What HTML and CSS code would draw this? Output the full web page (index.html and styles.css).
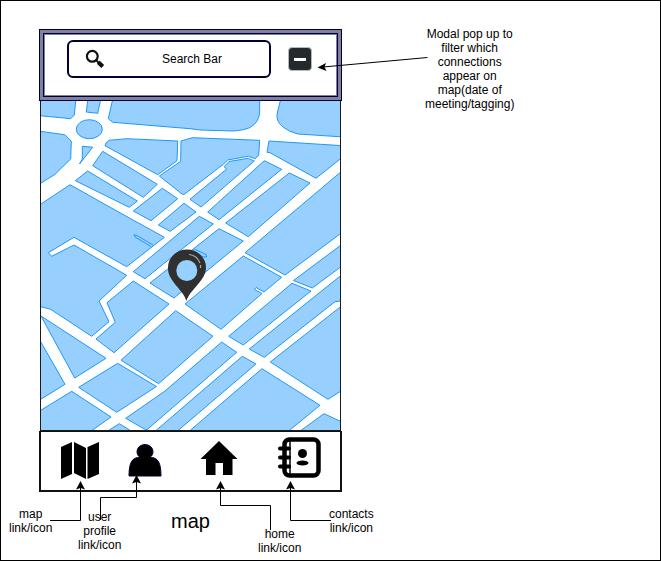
FILE: index.html
```html
<!DOCTYPE html>
<html lang="en">
<head>
<meta charset="utf-8">
<title>Map wireframe</title>
<link rel="stylesheet" href="styles.css">
</head>
<body>
<main class="canvas">
  <section class="phone">
    <header class="toolbar">
      <label class="search">
        <svg class="search-icon" viewBox="0 0 20 20" aria-hidden="true"><circle cx="7.3" cy="7.3" r="5.4" fill="none" stroke="#111" stroke-width="2.2"/><path d="M11.5 11.5l6 6" stroke="#111" stroke-width="2"/><path d="M13.3 13.3l4.4 4.2" stroke="#111" stroke-width="4.2"/></svg>
        <input class="search-input" type="text" placeholder="Search Bar" aria-label="Search Bar">
      </label>
      <button class="filter" type="button" aria-label="Filter connections"><span class="minus"></span></button>
    </header>
    <div class="map">
      <svg class="map-art" viewBox="41 101 299 329" preserveAspectRatio="xMidYMid slice" role="img" aria-label="Street map">
        <g class="blocks">
          <path d="M38 98H76L74.300 115 70.700 118.700 38 115.500Z"/>
          <path d="M88 98L86.300 112 97.700 113.300 101 98Z"/>
          <path d="M113 98L108.300 118.700 112.700 122.300 190 128.700 200 130 233 131Q245 130 250 127.500 260 122 259.700 110V98Z"/>
          <path d="M281 98L277.500 112Q275 121 283 127 289 132 298 134L344 137V98Z"/>
          <ellipse cx="89.300" cy="129.200" rx="13" ry="9.500"/>
          <path d="M38 131L64.700 134.700 71.300 141 70.700 159 55 174.300 38 185Z"/>
          <path d="M82.300 146.300L92.700 147.200 79.500 164 82.300 159Z"/>
          <path d="M109.300 140.300L126.700 138.700 177.700 141 177 160.700 157.700 174.700 105 145.700 106 143Z"/>
          <path d="M181 141L192.300 137.700 259.700 140.300 258.700 155 255.300 158.700 248.300 156.300 227.700 160 223.300 164.300 184 194.500 182 194 159.300 176 180.700 161.300Z"/>
          <path d="M224 166.700L229 161.500 248.300 158.300 254.300 161 201 207 190 199.300 226.700 169Z"/>
          <path d="M269 141L344 145.800V156L316 178.300 270 152.700 267 152.300Z"/>
          <path d="M264.300 160.700L281.700 169.300 219 219.700 207.700 212Z"/>
          <path d="M289.300 173L310 183 248.300 236.700 225.700 223Z"/>
          <path d="M344 169.300L245 252.700 285 275 344 231Z"/>
          <path d="M243.300 256L281.700 277.300 264 292 256 287.500 254.500 289.500 262 293.500 221 329.300 185 304Z"/>
          <path d="M344 242.800L293.500 280.500 312.300 288 344 264.500Z"/>
          <path d="M292 283.300L311 291 243.300 345 228.700 336.300Z"/>
          <path d="M344 273L249.300 349 264.300 357.300 335 301.700 344 300.500Z"/>
          <path d="M344 304L270.300 362 328 399.300 344 389Z"/>
          <path d="M324 413.700L344 423V434H296Z"/>
          <path d="M262 368.700L320 405.300 285 434H186Z"/>
          <path d="M242.300 356.300L256 364 174 434H152Z"/>
          <path d="M221.700 342L236.700 352.300 142 434 147 430.500 125.700 418.300 165 391Z"/>
          <path d="M119.300 423.700L136 434H103Z"/>
          <path d="M117.700 363.300L156.500 386.500 116.700 412.300 78.700 387.300Z"/>
          <path d="M175.700 310.700L213 336.300 158.500 383.700 121 360.200Z"/>
          <path d="M71.700 391.300L111 417 87 434H38V412Z"/>
          <path d="M38 337L65 384.300 38 401Z"/>
          <path d="M41 316L106 358.300 74.700 378Z"/>
          <path d="M38 306L50.700 309.300 91.700 336.300 109 321.700 99 301 126.700 275.300 74 245 51.700 256.300 48.300 252.700 74 237.300 126.700 266.700 164.300 237.300 106 205 70 184.700 38 206Z"/>
          <path d="M133.300 281L169 304 114 352.700 96 339 115.300 322.300 107 302.700Z"/>
          <path d="M87.700 171L137.300 201 129.300 207.300 75.300 180.700Z"/>
          <path d="M102.700 151.300L157.300 184.300 143.300 197.300 92.700 165.700Z"/>
          <path d="M162.300 188.300L177.700 198.700 151 220.700 133.300 211Z"/>
          <path d="M184 203.300L196 212 170.300 231.300 158.300 225Z"/>
          <path d="M199.300 216.300L213.300 224 145 278.700 133.300 271.700Z"/>
          <path d="M219 228.700L243.300 241 174 298 150 283Z"/>
          <path d="M151 246.500L135 237 134 234.800 137 235.500 153 245M194 249L206 254.500 206.500 257 203 257 193 251"/>
        </g>
        <path d="M186.500 301C183 289 167.500 281 168 267.500A19 18 0 0 1 206 267.500C206 281 190 289 186.500 301ZM186.800 260A10.500 10.500 0 1 0 186.800 281 10.500 10.500 0 0 0 186.800 260Z" fill="#303030" fill-rule="evenodd"/>
        <path d="M189 254.500Q197 255.500 200 263M200.500 265V268" fill="none" stroke="#aaa" stroke-width="1.200"/>
      </svg>
    </div>
    <nav class="tabs">
      <a class="tab" href="#map" aria-label="Map"><svg class="tab-icon" viewBox="0 0 42 42" aria-hidden="true"><path d="M2 7L13 2V34L2 39ZM15 2L27 8V39L15 33ZM28.500 7L40 2V34L28.500 39Z"/></svg></a>
      <a class="tab" href="#profile" aria-label="User profile"><svg class="tab-icon" viewBox="0 0 42 42" aria-hidden="true"><path d="M16 17.500C11 14 12 5 21 4.500 30 5 31 14 26 17.500 34 17 37 23 37 36H5C5 23 8 17 16 17.500Z" stroke="#000033"/></svg></a>
      <a class="tab" href="#home" aria-label="Home"><svg class="tab-icon" viewBox="0 0 42 42" aria-hidden="true"><path d="M21 1L39.500 19H34.500V35H25V23H17.500V35H8V19H2.500Z"/></svg></a>
      <a class="tab" href="#contacts" aria-label="Contacts"><svg class="contacts-icon" viewBox="0 0 46 44" aria-hidden="true"><rect x="8.500" y="3.500" width="34" height="36" rx="5" fill="#fff" stroke="#000" stroke-width="4.500"/><path d="M14 3V40" stroke="#000" stroke-width="1.500"/><path d="M4 12.500H13M4 21.500H13M4 30.500H13" stroke="#000" stroke-width="4" stroke-linecap="round"/><circle cx="26.500" cy="17.500" r="4.500"/><ellipse cx="26.500" cy="27" rx="6" ry="2.600"/></svg></a>
    </nav>
  </section>
  <h1 class="title">map</h1>
  <svg class="connectors" viewBox="0 0 661 561" aria-hidden="true">
    <g class="lines"><path d="M427.500 57.500L323 67"/><path d="M50 520.500H80.500V488"/><path d="M100.500 520V497.500H136.500V482"/><path d="M270.500 530V505.500H220.500V488"/><path d="M331 520.500H290.500V488"/></g>
    <g><path d="M317.500 67.500L326 63 324.500 67 326.500 71Z"/><path id="head" d="M80.500 481L85 489.500 80.500 488 76 489.500Z"/><use href="#head" x="56" y="-6"/><use href="#head" x="140"/><use href="#head" x="210"/></g>
  </svg>
  <p class="note note-filter">Modal pop up to<br>filter which<br>connections<br>appear on<br>map(date of<br>meeting/tagging)</p>
  <p class="note note-map">map<br>link/icon</p>
  <p class="note note-user">user<br>profile<br>link/icon</p>
  <p class="note note-home">home<br>link/icon</p>
  <p class="note note-contacts">contacts<br>link/icon</p>
</main>
</body>
</html>
```
FILE: styles.css
```css
* { box-sizing: border-box; }
body { margin: 0; background: #fff; color: #000; font: 12px/14px "Liberation Sans", Arial, sans-serif; }
.canvas { position: relative; min-height: 100vh; padding: 28px 38px; border: 1px solid #000; }
.phone { max-width: 303px; display: flex; flex-direction: column; }
.toolbar {
  display: flex; align-items: flex-start; gap: 17px; padding: 10px 29px 22px 27px;
  border: 1px solid #000033; background: #fff;
  box-shadow: inset 0 0 0 3px #8080a0, inset 0 0 0 4px #000033, inset 0 0 0 5px #8080a0;
}
.search {
  display: flex; flex: 1; align-items: center; height: 38px; padding: 0 16px;
  border: 2px solid #000033; border-radius: 6px;
}
.search-icon { width: 20px; height: 20px; flex: none; }
.search-input {
  flex: 1; min-width: 0; width: 100%; padding: 0 0 0 26px; border: 0; outline: 0; background: none;
  color: #000; font: inherit; text-align: center;
}
.search-input::placeholder { color: #000; opacity: 1; }
.filter {
  display: grid; flex: none; place-items: center; width: 24px; height: 24px; margin-top: 7px; padding: 0;
  border: 1px solid #aebabd; border-radius: 4px; background: #26292b;
}
.minus { width: 12px; height: 3px; background: #fff; }
.map { margin: 0 1px; border: 1px solid #1a1a1a; border-top: 0; background: #fff; }
.map-art { display: block; width: 100%; }
.blocks { fill: #97d0ff; stroke: #2196f8; stroke-width: 1; }
.tabs {
  display: grid; grid-template-columns: 68fr 62fr 86fr 74fr; align-items: end;
  padding: 4px 4px 8px 5px; border: 2px solid #111; border-top-width: 1px;
}
.tab { display: flex; justify-content: center; color: #000; }
.tab-icon { display: block; width: 42px; height: 42px; }
.contacts-icon { display: block; width: 46px; height: 44px; margin-bottom: 2px; }
.title { position: absolute; left: 170px; top: 508px; margin: 0; font-size: 20px; line-height: 24px; font-weight: 400; }
.connectors { position: absolute; left: -1px; top: -1px; width: 661px; height: 561px; pointer-events: none; }
.lines { fill: none; stroke: #000; stroke-width: 1; }
.note { position: absolute; margin: 0; text-align: center; white-space: nowrap; }
.note-filter { left: 424px; top: 26px; }
.note-map { left: 8px; top: 506px; }
.note-user { left: 77px; top: 509px; }
.note-home { left: 257px; top: 526px; }
.note-contacts { left: 328px; top: 506px; }
```
